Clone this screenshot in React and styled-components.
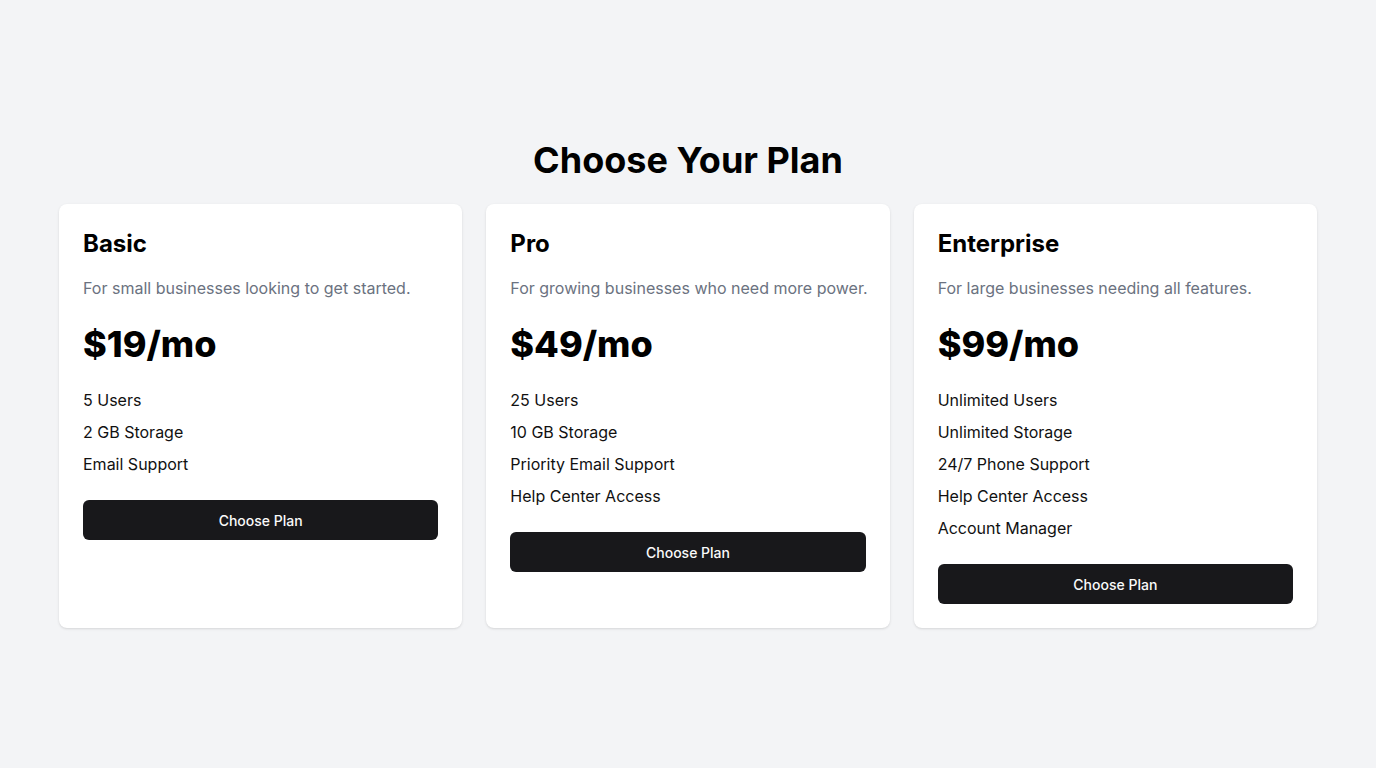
import React from "react";
import styled, { createGlobalStyle } from "styled-components";

const Global = createGlobalStyle`
  * { box-sizing: border-box; }
  body {
    margin: 0;
    background: #f3f4f6;
    font-family: Inter, "Noto Sans", sans-serif;
    color: #0a0a0a;
  }
`;

const Page = styled.main`
  min-height: 100vh;
  display: flex;
  flex-direction: column;
  justify-content: center;
  padding: 0 59px;
`;

const Heading = styled.h1`
  margin: 0 0 24px;
  font-size: 36px;
  line-height: 40px;
  font-weight: 700;
  text-align: center;
  color: #000;
`;

const Grid = styled.div`
  display: grid;
  grid-template-columns: repeat(3, minmax(0, 1fr));
  gap: 24px;
`;

const Card = styled.section`
  background: #fff;
  border-radius: 8px;
  padding: 24px;
  box-shadow: 0 1px 3px rgba(0, 0, 0, 0.1), 0 1px 2px -1px rgba(0, 0, 0, 0.1);
  display: flex;
  flex-direction: column;
`;

const Title = styled.h2`
  margin: 0;
  font-size: 24px;
  line-height: 32px;
  font-weight: 700;
  color: #000;
`;

const Description = styled.p`
  margin: 16px 0 0;
  font-size: 16px;
  line-height: 24px;
  color: #6b7280;
  white-space: nowrap;
`;

const Price = styled.div`
  margin-top: 24px;
  font-size: 36px;
  line-height: 40px;
  font-weight: 800;
  color: #000;
`;

const Features = styled.ul`
  list-style: none;
  margin: 24px 0 0;
  padding: 0;
  display: flex;
  flex-direction: column;
  gap: 8px;
`;

const Feature = styled.li`
  font-size: 16px;
  line-height: 24px;
  color: #111;
`;

const Button = styled.button`
  margin-top: 24px;
  height: 40px;
  width: 100%;
  border: none;
  border-radius: 6px;
  background: #18181b;
  color: #fafafa;
  font-family: inherit;
  font-size: 14px;
  font-weight: 500;
  cursor: pointer;
`;

const plans = [
  {
    name: "Basic",
    desc: "For small businesses looking to get started.",
    price: "$19/mo",
    features: ["5 Users", "2 GB Storage", "Email Support"],
  },
  {
    name: "Pro",
    desc: "For growing businesses who need more power.",
    price: "$49/mo",
    features: ["25 Users", "10 GB Storage", "Priority Email Support", "Help Center Access"],
  },
  {
    name: "Enterprise",
    desc: "For large businesses needing all features.",
    price: "$99/mo",
    features: [
      "Unlimited Users",
      "Unlimited Storage",
      "24/7 Phone Support",
      "Help Center Access",
      "Account Manager",
    ],
  },
];

export default function App() {
  return (
    <>
      <Global />
      <Page>
        <Heading>Choose Your Plan</Heading>
        <Grid>
          {plans.map((p) => (
            <Card key={p.name}>
              <Title>{p.name}</Title>
              <Description>{p.desc}</Description>
              <Price>{p.price}</Price>
              <Features>
                {p.features.map((f) => (
                  <Feature key={f}>{f}</Feature>
                ))}
              </Features>
              <div>
                <Button>Choose Plan</Button>
              </div>
            </Card>
          ))}
        </Grid>
      </Page>
    </>
  );
}
